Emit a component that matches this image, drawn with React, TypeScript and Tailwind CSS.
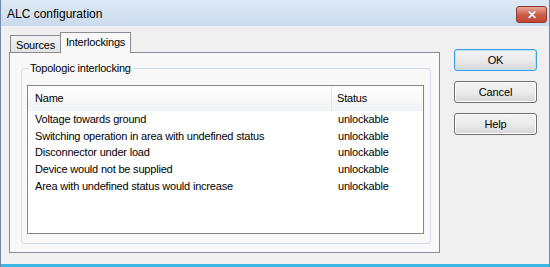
const rows = [
  "Voltage towards ground",
  "Switching operation in area with undefined status",
  "Disconnector under load",
  "Device would not be supplied",
  "Area with undefined status would increase",
];

function DialogButton({ label, focused }: { label: string; focused?: boolean }) {
  return (
    <button
      className={
        "flex h-[22px] w-[83px] items-center justify-center rounded-[3px] border bg-gradient-to-b from-[#f2f2f2] via-[#ebebeb] to-[#d6d6d6] text-[11px] tracking-[-0.1px] text-black " +
        (focused
          ? "border-[#3c9ede] shadow-[inset_0_0_0_1px_#b4e2f8]"
          : "border-[#707070] shadow-[inset_0_0_0_1px_#fbfbfb]")
      }
    >
      {label}
    </button>
  );
}

export default function App() {
  return (
    <div className="flex h-[267px] w-[550px] flex-col overflow-hidden border-l border-r border-[#6f8aa8] bg-[#f0f0f0] font-['Liberation_Sans',Arial,sans-serif] text-[11px] tracking-[-0.2px] text-black">
      {/* title bar */}
      <div className="flex h-[26px] shrink-0 items-start justify-between bg-gradient-to-b from-[#dde9f5] to-[#cadbed] pl-[6px] pr-[2px]">
        <span className="mt-[6px] text-[12px] leading-[16px] tracking-normal text-black">ALC configuration</span>
        <div className="mt-[6px] flex h-[17px] w-[31px] items-center justify-center rounded-[3px] border border-[#8a3a2e] bg-gradient-to-b from-[#e8a89a] via-[#d0604b] to-[#c2452f] text-[12px] font-bold leading-none text-white [text-shadow:0_0_1px_#5a1a10]">
          ✕
        </div>
      </div>

      {/* body */}
      <div className="flex flex-1 pl-[8px] pt-[6px]">
        {/* tab control */}
        <div className="flex w-[431px] flex-col">
          <div className="flex h-[20px] items-end pl-[1px]">
            <div className="mb-[-1px] flex h-[18px] items-center border border-b-0 border-[#898c95] bg-gradient-to-b from-[#f3f3f3] to-[#e2e2e2] px-[5px] pt-[1px]">
              Sources
            </div>
            <div className="relative z-10 mb-[-1px] ml-[-1px] flex h-[21px] items-center border border-b-0 border-[#898c95] bg-[#f8f8f8] px-[5px] pb-[2px]">
              Interlockings
            </div>
          </div>
          <div className="h-[201px] border border-[#898c95] bg-[#f8f8f8] pl-[11px] pt-[15px]">
            {/* group box */}
            <div className="relative h-[176px] w-[410px] rounded-[3px] border border-[#d5dfe5] pl-[5px] pt-[16px]">
              <span className="absolute left-[7px] top-[-8px] bg-[#f8f8f8] px-[1px] leading-[14px]">
                Topologic interlocking
              </span>
              {/* list view */}
              <div className="h-[149px] w-[397px] border border-[#828790] bg-white">
                <div className="flex h-[25px] bg-gradient-to-b from-[#ffffff] to-[#f1f2f4]">
                  <div className="flex w-[304px] items-center border-r border-[#e3e5e8] pl-[7px]">Name</div>
                  <div className="flex flex-1 items-center pl-[5px]">Status</div>
                </div>
                <div>
                  {rows.map((r) => (
                    <div key={r} className="flex h-[16.75px] items-center leading-none">
                      <div className="w-[304px] pl-[7px]">{r}</div>
                      <div className="pl-[6px]">unlockable</div>
                    </div>
                  ))}
                </div>
              </div>
            </div>
          </div>
        </div>

        {/* buttons */}
        <div className="ml-[14px] flex flex-col gap-[10px] pt-[17px]">
          <DialogButton label="OK" focused />
          <DialogButton label="Cancel" />
          <DialogButton label="Help" />
        </div>
      </div>
      <div className="h-[3px] shrink-0 bg-[#3bb7e3]" />
    </div>
  );
}
